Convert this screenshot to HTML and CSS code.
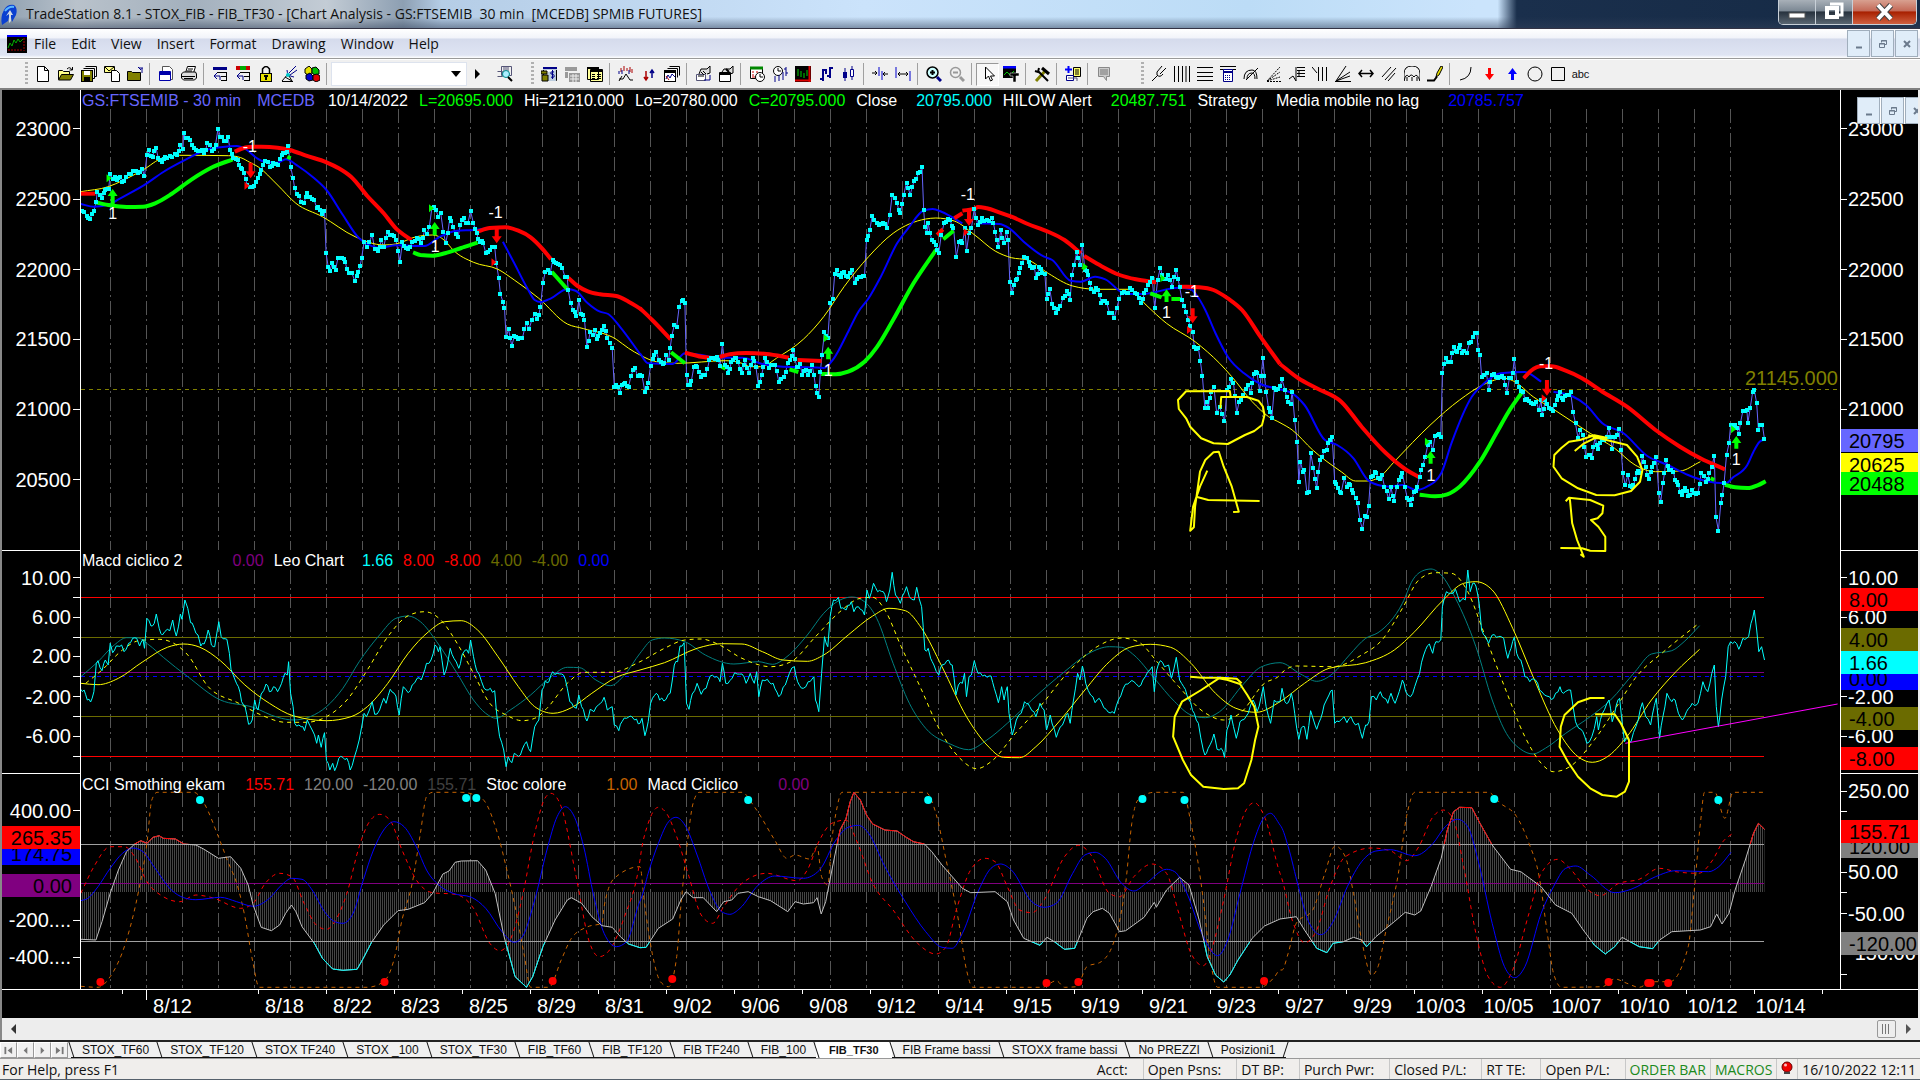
FILE: index.html
```html
<!DOCTYPE html>
<html lang="en">
<head>
    <meta charset="UTF-8">
    <meta name="viewport" content="width=device-width, initial-scale=1.0">
    <title>TradeStation 8.1 - STOX_FIB - FIB_TF30</title>
    <link rel="stylesheet" href="styles.css">
</head>
<body>
    <header class="titlebar">
        <svg class="app-icon" viewBox="0 0 18 26"><path d="M4 9 Q7 3 14 4 Q18 7 16 14 L12 21 L10 12 L8 20 L2 24 Q0 16 4 9Z" fill="#0a3fd0"/><path d="M5 10 Q9 5 14 6" stroke="#5bb8ff" stroke-width="2" fill="none"/><path d="M9 22 V13 L6 15 L10 9 L13 14 L11 14 V20Z" fill="#cfd9e6"/></svg>
        <h1 class="title">TradeStation 8.1 - STOX_FIB - FIB_TF30 - [Chart Analysis - GS:FTSEMIB&nbsp; 30 min&nbsp; [MCEDB] SPMIB FUTURES]</h1>
        <div class="window-buttons">
            <button class="win-btn" aria-label="Minimize"><svg viewBox="0 0 20 20"><rect x="2" y="11" width="16" height="5" fill="#fff" stroke="#555"/></svg></button>
            <button class="win-btn" aria-label="Restore"><svg viewBox="0 0 20 20"><path d="M6 2h12v11h-3" fill="none" stroke="#fff" stroke-width="3"/><rect x="3" y="6" width="10" height="9" fill="none" stroke="#fff" stroke-width="4"/></svg></button>
            <button class="win-btn win-close" aria-label="Close"><svg viewBox="0 0 20 20"><path d="M3 3L16 17M16 3L3 17" stroke="#444" stroke-width="6"/><path d="M3 3L16 17M16 3L3 17" stroke="#fff" stroke-width="4"/></svg></button>
        </div>
    </header>

    <nav class="menubar">
        <svg class="doc-icon" viewBox="0 0 20 18"><rect width="20" height="18" fill="#000"/><rect width="20" height="2" fill="#00f"/><path d="M1 13l2-5 2 3 2-6 2 3 2-4 2 3 3-3" stroke="#0a0" fill="none"/><path d="M1 15h14M17 3v13" stroke="#a00" stroke-dasharray="2 1"/></svg>
        <a href="#">File</a>
        <a href="#">Edit</a>
        <a href="#">View</a>
        <a href="#">Insert</a>
        <a href="#">Format</a>
        <a href="#">Drawing</a>
        <a href="#">Window</a>
        <a href="#">Help</a>
        <div class="mdi-buttons">
            <button class="mdi-btn" aria-label="Minimize chart"><svg viewBox="0 0 10 10"><path d="M2 8.500h6" stroke="#6b7a8c" stroke-width="2"/></svg></button>
            <button class="mdi-btn" aria-label="Restore chart"><svg viewBox="0 0 10 10"><path d="M3.500 3.500v-2h5v4h-2M3 2h6M1 5h6M1.500 4.500h5v4h-5z" fill="none" stroke="#6b7a8c"/></svg></button>
            <button class="mdi-btn" aria-label="Close chart"><svg viewBox="0 0 10 10"><path d="M2 2l6 6M8 2l-6 6" stroke="#6b7a8c" stroke-width="2"/></svg></button>
        </div>
    </nav>

    <div class="toolbar">
        <span class="grip"></span>
        <button class="tool" aria-label="New"><svg viewBox="0 0 16 16"><path d="M2.500.500h7l4 4v11h-11zM9.500.500v4h4" fill="#fff" stroke="#000"/></svg></button>
        <button class="tool" aria-label="Open"><svg viewBox="0 0 16 16"><path d="M.500 13.500v-9h4l1 1h6v3" fill="#ff8" stroke="#000"/><path d="M.500 14l3-5.500h12l-3 5.500z" fill="#808000" stroke="#000"/><path d="M9 3q3-3 5 1M14.500 1v3h-3" fill="none" stroke="#000"/></svg></button>
        <button class="tool" aria-label="Save all"><svg viewBox="0 0 16 16"><path d="M4.500 .500h11v10h-2M2.500 2.500h11v10h-2" fill="none" stroke="#000"/><rect x=".5" y="4.500" width="11" height="11" fill="#808000" stroke="#000"/><path d="M3 5h6v4h-6z" fill="#fff"/><path d="M3 11h6v4h-6z" fill="#000"/></svg></button>
        <button class="tool" aria-label="Mail"><svg viewBox="0 0 16 16"><path d="M.500 .500h10v6h-10z" fill="#ff8" stroke="#000"/><path d="M1 1l4 4 5-4" fill="none" stroke="#000"/><path d="M7.500 4.500h5l3 3v8h-8z" fill="#fff" stroke="#000"/></svg></button>
        <button class="tool" aria-label="Folder"><svg viewBox="0 0 16 16"><path d="M.500 14.500v-9h4l1 1h8v8z" fill="#808000" stroke="#000"/><path d="M15 7V2M12 2h4M11 1l3 3" stroke="#008" fill="none"/></svg></button>
        <span class="sep"></span>
        <button class="tool" aria-label="Window"><svg viewBox="0 0 16 16"><path d="M4.500.500h7l3 3v10h-10z" fill="#fff" stroke="#555"/><path d="M1.500 5.500h11v9h-11z" fill="#fff" stroke="#00a"/><path d="M1 6h12v3H1z" fill="#00a"/></svg></button>
        <button class="tool" aria-label="Print"><svg viewBox="0 0 16 16"><path d="M4.500 7l2-6.500h8l-2 6.500" fill="#fff" stroke="#000"/><path d="M.500 8l2-2h12l1 2v4l-2 2h-11l-2-2z" fill="#ddd" stroke="#000"/><path d="M1 10.500h13M3 12.500h9M7 3h5M6 5h5" stroke="#000"/></svg></button>
        <span class="sep"></span>
        <button class="tool" aria-label="Back symbol"><svg viewBox="0 0 16 16"><path d="M1 1h14v3H1z" fill="#008"/><path d="M5 6.500h10M9 10.500h6M9 14.500h6M14.500 6v9" stroke="#000"/><path d="M5 7l-3 3 3 3M2 10h6v4" fill="none" stroke="#008"/></svg></button>
        <button class="tool" aria-label="Colour symbol"><svg viewBox="0 0 16 16"><path d="M1 0h14v4H1z" fill="#0a0"/><path d="M1 0h4v4H1zM11 0h4v4h-4z" fill="#c00"/><path d="M5 6.500h10M9 10.500h6M9 14.500h6M14.500 6v9" stroke="#000"/><path d="M5 7l-3 3 3 3M2 10h6v4" fill="none" stroke="#008"/></svg></button>
        <button class="tool" aria-label="Lock"><svg viewBox="0 0 16 16"><path d="M4.500 7V3q3.500-5 7 0v4" fill="none" stroke="#000" stroke-width="1.500"/><rect x="2.500" y="7.500" width="11" height="8" fill="#e6e000" stroke="#000"/><path d="M6 9h4v2H9v3H7v-3H6z" fill="#000"/></svg></button>
        <button class="tool" aria-label="Satellite"><svg viewBox="0 0 16 16"><path d="M8 7l7-7M9 9l7-5M6 4q0 6 7 7" stroke="#008" fill="none"/><path d="M1 15l6-7 4 7M4 11l7 4M1 15.500h11" stroke="#000" fill="none"/><circle cx="7" cy="9" r="2" fill="#0cc"/></svg></button>
        <button class="tool" aria-label="Cubes"><svg viewBox="0 0 16 16"><path d="M1 3l4-3 3 3v4l-4 2-3-2z" fill="#e6e000" stroke="#000"/><path d="M8 2l4-1 3 3v4l-4 1-3-2z" fill="#0b0" stroke="#000"/><path d="M2 9l4-2 3 3v4l-4 1-3-2z" fill="#00c" stroke="#000"/><path d="M9 9l4-1 3 2v4l-4 2-3-2z" fill="#d00" stroke="#000"/></svg></button>
        <span class="sep"></span>
        <select class="symbol-box" aria-label="Symbol"><option></option></select>
        <button class="tool narrow" aria-label="Go"><svg viewBox="0 0 16 16"><path d="M6 3l5 5-5 5z" fill="#000"/></svg></button>
        <button class="tool lookup" aria-label="Lookup"><svg viewBox="0 0 16 16"><path d="M4.500 .500h10v9h-10zM.500 5.500h5v5h-5M7 1v5M9 1v3M11 1v4" fill="none" stroke="#557"/><circle cx="9" cy="8" r="3.500" fill="#aef" stroke="#088"/><path d="M11 11l4 4" stroke="#000" stroke-width="2"/></svg></button>
        <span class="grip"></span>
        <button class="tool" aria-label="Money table"><svg viewBox="0 0 16 16"><path d="M2.500 1.500h13v13h-13z" fill="#fff" stroke="#000"/><path d="M2 1h14v3H2zM7 6v9h8V4z" fill="#bcd"/><path d="M2 2h14" stroke="#008" stroke-width="2"/><path d="M13 6q-4-1-3 2 4 0 3 3-2 1-3 0M11.500 4v9" fill="none" stroke="#008"/><path d="M0 5h6v3H0zM1 9h6v6H1z" fill="#808000" stroke="#000"/></svg></button>
        <button class="tool" aria-label="Grid off" disabled><svg viewBox="0 0 16 16"><path d="M1 1h12v4H1zM5 7h11v9H5zM1 6h3v6H1z" fill="#999"/><path d="M6 10h9M6 13h9M9 8v8M12 8v8" stroke="#eee"/></svg></button>
        <button class="tool" aria-label="Table"><svg viewBox="0 0 16 16"><path d="M.500 1.500h11v12H.500zM3.500 3.500h12v12h-12z" fill="#ff9" stroke="#000"/><path d="M0 2h12M4 5h11" stroke="#000" stroke-width="2"/><path d="M5 8.500h3M5 10.500h3M5 12.500h3M10 8.500h4M10 10.500h4M10 12.500h4" stroke="#000"/></svg></button>
        <span class="sep"></span>
        <button class="tool" aria-label="Insert analysis"><svg viewBox="0 0 16 16"><path d="M3 2v4M6 0v5M9 2v3M12 1v5M14 3v4" stroke="#a00"/><path d="M1 5v3M4 4v4M11 4v4" stroke="#008"/><path d="M1 13h4l3-5 4 6h3M1 15l3-5" fill="none" stroke="#000"/></svg></button>
        <button class="tool" aria-label="Strategy"><svg viewBox="0 0 16 16"><path d="M5 5v9M3 11l2 3 2-3" fill="none" stroke="#a00" stroke-width="1.500"/><path d="M11 12V4M9 7l2-3 2 3" fill="none" stroke="#008" stroke-width="1.500"/></svg></button>
        <button class="tool" aria-label="Chart stack"><svg viewBox="0 0 16 16"><path d="M5.500.500h10v9M3.500 2.500h10v9" fill="none" stroke="#000"/><rect x=".5" y="4.500" width="11" height="11" fill="#fff" stroke="#000"/><path d="M1 6h10" stroke="#000" stroke-width="2"/><path d="M2 13l2-4 2 3 2-4 3 3" fill="none" stroke="#008"/><path d="M2 10l3 4" stroke="#a00"/></svg></button>
        <span class="sep"></span>
        <button class="tool" aria-label="Format symbol"><svg viewBox="0 0 16 16"><path d="M4 8l2-5h6l3-3v7l-3 1" fill="#ddd" stroke="#000"/><path d="M1.500 8.500h9v6h-9z" fill="#fff" stroke="#557"/><path d="M3 10h6M8 5l3 3M6 6l3 3" stroke="#000"/><path d="M9 14h6V9" fill="none" stroke="#008"/></svg></button>
        <button class="tool" aria-label="Format window"><svg viewBox="0 0 16 16"><path d="M4 6l2-3h6l3-3v7l-3 1" fill="#ddd" stroke="#000"/><path d="M1.500 6.500h11v9h-11z" fill="#fff" stroke="#000"/><path d="M1 8h12M8 3l3 3" stroke="#000" stroke-width="2"/></svg></button>
        <span class="sep"></span>
        <button class="tool" aria-label="Calendar"><svg viewBox="0 0 16 16"><path d="M1.500 1.500h12v11h-12z" fill="#fff" stroke="#000"/><path d="M1 2h13" stroke="#080" stroke-width="3"/><path d="M3 6h2M7 6h2M3 9h2M3 11h3" stroke="#c00"/><circle cx="11" cy="11" r="4.500" fill="#fff" stroke="#000"/><path d="M11 8v3h3" fill="none" stroke="#000"/></svg></button>
        <button class="tool" aria-label="Interval"><svg viewBox="0 0 16 16"><circle cx="6" cy="5" r="4.500" fill="#fff" stroke="#000"/><path d="M6 2v3h3" fill="none" stroke="#000"/><path d="M3 10v6M7 9v6M11 6v8M14 1v9M12 3h2M14 7h2" stroke="#008"/></svg></button>
        <button class="tool" aria-label="Chart style"><svg viewBox="0 0 16 16"><path d="M0 0h16v16H0z" fill="#000"/><path d="M14.500 0v16M0 14.500h16" stroke="#d00" stroke-width="2"/><path d="M3 3v7M6 5v6M9 7v5M12 4v6" stroke="#0c0"/></svg></button>
        <button class="tool" aria-label="Bar chart"><svg viewBox="0 0 16 16"><path d="M5 3v12M12 1v11M5 4h4M2 13h3M12 2h3M9 10h3M8 3v5" stroke="#008" stroke-width="2" fill="none"/></svg></button>
        <button class="tool" aria-label="Candles"><svg viewBox="0 0 16 16"><path d="M4 2v13M11 0v14" stroke="#008"/><path d="M2 6h4v6H2z" fill="#008"/><path d="M9.500 3.500h3v7h-3z" fill="#fff" stroke="#008"/></svg></button>
        <span class="sep"></span>
        <button class="tool" aria-label="Decrease spacing"><svg viewBox="0 0 16 16"><path d="M7 1v9M10 5v9" stroke="#00c"/><path d="M0 7h5M3 5l2 2-2 2M16 8h-5M13 6l-2 2 2 2" fill="none" stroke="#000"/></svg></button>
        <button class="tool" aria-label="Increase spacing"><svg viewBox="0 0 16 16"><path d="M1 1v11M15 5v10" stroke="#00c"/><path d="M3 8h10M5 6L3 8l2 2M11 6l2 2-2 2" fill="none" stroke="#000"/></svg></button>
        <span class="sep"></span>
        <button class="tool" aria-label="Zoom in"><svg viewBox="0 0 16 16"><circle cx="6.500" cy="6.500" r="5.500" fill="#cff" stroke="#000" stroke-width="1.500"/><path d="M4 6.500h5M6.500 4v5" stroke="#000" stroke-width="2"/><path d="M11 11l4 4" stroke="#008" stroke-width="3"/></svg></button>
        <button class="tool" aria-label="Zoom out" disabled><svg viewBox="0 0 16 16"><circle cx="6.500" cy="6.500" r="5" fill="none" stroke="#999" stroke-width="1.500"/><path d="M4 6.500h5" stroke="#999" stroke-width="2"/><path d="M11 11l4 4" stroke="#999" stroke-width="3"/></svg></button>
        <span class="sep"></span>
        <button class="tool pressed" aria-label="Pointer"><svg viewBox="0 0 16 16"><path d="M5.500 1v12l3-3 2 5 2-1-2-4h4z" fill="#fff" stroke="#000"/></svg></button>
        <button class="tool" aria-label="Text tool"><svg viewBox="0 0 16 16"><path d="M0 0h13v12H0z" fill="#000"/><path d="M0 1h13" stroke="#00f" stroke-width="3"/><path d="M1 9l3-3 3 3 4-4" fill="none" stroke="#0c0"/><path d="M7 7h9v3h-3v6h-3v-6H7z" fill="#000" stroke="#fff" stroke-width=".5"/></svg></button>
        <span class="sep"></span>
        <button class="tool" aria-label="Tools"><svg viewBox="0 0 16 16"><path d="M2 15L12 4" stroke="#808000" stroke-width="3"/><path d="M8 2l7 6" stroke="#000" stroke-width="3"/><path d="M14 15L4 5M1 5l3 1 1-4" fill="none" stroke="#000" stroke-width="2"/></svg></button>
        <span class="sep"></span>
        <button class="tool" aria-label="Add sheets"><svg viewBox="0 0 16 16"><path d="M3.500 0v7M0 3.500h7" stroke="#00f" stroke-width="2"/><path d="M8.500 1.500h7v9h-7z" fill="#ff6" stroke="#000"/><path d="M10 4h4M10 6h4M10 8h4" stroke="#000"/><path d="M1.500 9.500h7v5h-7z" fill="#fff" stroke="#008"/><path d="M3 12h9v3" fill="none" stroke="#557"/></svg></button>
        <span class="sep"></span>
        <button class="tool" aria-label="Comment" disabled><svg viewBox="0 0 16 16"><path d="M2.500 1.500h11v9h-3v4l-3-4h-5z" fill="#ccc" stroke="#888"/><path d="M4 4h8M4 6h8M4 8h8" stroke="#777"/></svg></button>
        <span class="grip drawing"></span>
        <button class="tool" aria-label="Pitchfork"><svg viewBox="0 0 16 16"><path d="M1 15l6-6M6 6v3q3 3 6-1M6 6l5-6M9 8l6-6" fill="none" stroke="#000"/></svg></button>
        <button class="tool" aria-label="Vertical lines"><svg viewBox="0 0 16 16"><path d="M.500 0v16M4.500 0v16M8.500 0v16M15.500 0v16M12 0v16" stroke="#000"/></svg></button>
        <button class="tool" aria-label="Horizontal lines"><svg viewBox="0 0 16 16"><path d="M0 1.500h16M0 6.500h16M0 10.500h16M0 14.500h16" stroke="#000"/></svg></button>
        <button class="tool" aria-label="Calculator"><svg viewBox="0 0 16 16"><path d="M0 .500h16M0 3.500h16" stroke="#000"/><path d="M3.500 3.500h9v12h-9z" fill="#fff" stroke="#008"/><path d="M4 6h8" stroke="#008" stroke-width="2"/><path d="M5 9.500h6M5 11.500h6M5 13.500h6" stroke="#008" stroke-dasharray="1 1"/></svg></button>
        <button class="tool" aria-label="Arcs"><svg viewBox="0 0 16 16"><path d="M1 13Q1 4 9 4q5 0 5 9M4 13q0-6 5-6 3 0 3 6M3 14L15 2" fill="none" stroke="#000"/></svg></button>
        <button class="tool" aria-label="Fan"><svg viewBox="0 0 16 16"><path d="M1 15.500h14M1 15L14 1M1 15l13-9M1 15l13-4" fill="none" stroke="#000" stroke-dasharray="2 1"/></svg></button>
        <button class="tool" aria-label="Retracement"><svg viewBox="0 0 16 16"><path d="M0 13l4-3 3 5V1M8 1.500h8M8 4.500h8M8 7.500h8M8 10.500h8M10 4v6" fill="none" stroke="#000"/></svg></button>
        <button class="tool" aria-label="Time lines"><svg viewBox="0 0 16 16"><path d="M0 1l5 6M6.500 1v14M10.500 1v14M14.500 1v14" fill="none" stroke="#000"/></svg></button>
        <button class="tool" aria-label="Gann fan"><svg viewBox="0 0 16 16"><path d="M0 15.500h16M1 15L11 0M1 15L15 6M1 15l14-5" fill="none" stroke="#000"/></svg></button>
        <button class="tool" aria-label="Extend"><svg viewBox="0 0 16 16"><path d="M1 7.500h14M4 4L1 7.500 4 11M12 4l3 3.500-3 3.500" fill="none" stroke="#000" stroke-width="1.500"/></svg></button>
        <button class="tool" aria-label="Parallel lines"><svg viewBox="0 0 16 16"><path d="M1 11L10 1M4 14L15 2M7 15l7-8" fill="none" stroke="#000"/></svg></button>
        <button class="tool" aria-label="Cycles"><svg viewBox="0 0 16 16"><path d="M0 15V8q0-8 8-8t8 8v7M0 15q2-9 5-4 2-4 5 0 3-5 6 4M3 11v4M8 11v4M13 11v4" fill="none" stroke="#000"/></svg></button>
        <button class="tool" aria-label="Pencil"><svg viewBox="0 0 16 16"><path d="M9 11l1-4 4-7 2 1-4 8z" fill="#e6e000" stroke="#000"/><path d="M0 14.500h7l3-4" fill="none" stroke="#000" stroke-width="2"/></svg></button>
        <span class="sep"></span>
        <button class="tool" aria-label="Arc"><svg viewBox="0 0 16 16"><path d="M13 1q0 11-11 13" fill="none" stroke="#000"/></svg></button>
        <button class="tool" aria-label="Arrow down"><svg viewBox="0 0 16 16"><path d="M7 2h3v6h3l-4.500 6L4 8h3z" fill="#f00"/></svg></button>
        <button class="tool" aria-label="Arrow up"><svg viewBox="0 0 16 16"><path d="M7 14h3V8h3L8.500 2 4 8h3z" fill="#00f"/></svg></button>
        <button class="tool" aria-label="Ellipse"><svg viewBox="0 0 16 16"><circle cx="8" cy="8" r="7" fill="none" stroke="#000"/></svg></button>
        <button class="tool" aria-label="Rectangle"><svg viewBox="0 0 16 16"><path d="M1.500 1.500h13v13h-13z" fill="none" stroke="#000"/></svg></button>
        <button class="tool abc">abc</button>
    </div>

    <main class="chart">
        <svg class="plot" id="plot" viewBox="81 90 1759 899" preserveAspectRatio="none"></svg>
        <svg class="plot labels" id="labels"></svg>
        <svg class="axis-left" id="axis-left"></svg>
        <svg class="axis-right" id="axis-right"></svg>
        <svg class="axis-time" id="axis-time"></svg>

        <div class="legend legend-price">
            <span class="slate">GS:FTSEMIB - 30 min</span>
            <span class="slate wide">MCEDB</span>
            <span>10/14/2022</span>
            <span class="green">L=20695.000</span>
            <span>Hi=21210.000</span>
            <span>Lo=20780.000</span>
            <span class="green">C=20795.000</span>
            <span>Close</span>
            <span class="cyan value">20795.000</span>
            <span>HILOW Alert</span>
            <span class="green value">20487.751</span>
            <span>Strategy</span>
            <span class="value">Media mobile no lag</span>
            <span class="blue far">20785.757</span>
        </div>
        <div class="legend legend-macd">
            <span>Macd ciclico 2</span>
            <span class="purple far">0.00</span>
            <span>Leo Chart</span>
            <span class="cyan value">1.66</span>
            <span class="red">8.00</span>
            <span class="red">-8.00</span>
            <span class="olive">4.00</span>
            <span class="olive">-4.00</span>
            <span class="blue">0.00</span>
        </div>
        <div class="legend legend-cci">
            <span>CCI Smothing ekam</span>
            <span class="red value">155.71</span>
            <span class="gray">120.00</span>
            <span class="gray">-120.00</span>
            <span class="dark">155.71</span>
            <span>Stoc colore</span>
            <span class="orange far">1.00</span>
            <span>Macd Ciclico</span>
            <span class="purple far">0.00</span>
        </div>

        <div class="mdi-buttons floating">
            <button class="mdi-btn" aria-label="Minimize pane"><svg viewBox="0 0 10 10"><path d="M2 8.500h6" stroke="#6b7a8c" stroke-width="2"/></svg></button>
            <button class="mdi-btn" aria-label="Restore pane"><svg viewBox="0 0 10 10"><path d="M3.500 3.500v-2h5v4h-2M3 2h6M1 5h6M1.500 4.500h5v4h-5z" fill="none" stroke="#6b7a8c"/></svg></button>
            <button class="mdi-btn" aria-label="Close pane"><svg viewBox="0 0 10 10"><path d="M2 2l6 6M8 2l-6 6" stroke="#6b7a8c" stroke-width="2"/></svg></button>
        </div>
    </main>

    <div class="scrollbar">
        <button class="scroll-btn" aria-label="Scroll left"><svg viewBox="0 0 8 10"><path d="M6 0v10L1 5z" fill="#333"/></svg></button>
        <span class="scroll-track"><span class="scroll-thumb"></span></span>
        <button class="scroll-btn" aria-label="Scroll right"><svg viewBox="0 0 8 10"><path d="M2 0v10l5-5z" fill="#555"/></svg></button>
    </div>

    <div class="tabs">
        <button class="tab-nav" aria-label="First"><svg viewBox="0 0 10 10"><path d="M1.500 1v8" stroke="#777" stroke-width="2"/><path d="M9 1v8L4 5z" fill="#777"/></svg></button>
        <button class="tab-nav" aria-label="Previous"><svg viewBox="0 0 10 10"><path d="M7 1v8L3 5z" fill="#777"/></svg></button>
        <button class="tab-nav" aria-label="Next"><svg viewBox="0 0 10 10"><path d="M3 1v8l4-4z" fill="#777"/></svg></button>
        <button class="tab-nav" aria-label="Last"><svg viewBox="0 0 10 10"><path d="M8.500 1v8" stroke="#777" stroke-width="2"/><path d="M1 1v8l5-4z" fill="#777"/></svg></button>
        <button class="tab first">STOX_TF60</button>
        <button class="tab">STOX_TF120</button>
        <button class="tab">STOX TF240</button>
        <button class="tab">STOX _100</button>
        <button class="tab">STOX_TF30</button>
        <button class="tab">FIB_TF60</button>
        <button class="tab">FIB_TF120</button>
        <button class="tab">FIB TF240</button>
        <button class="tab">FIB_100</button>
        <button class="tab active">FIB_TF30</button>
        <button class="tab">FIB Frame bassi</button>
        <button class="tab">STOXX frame bassi</button>
        <button class="tab">No PREZZI</button>
        <button class="tab last">Posizioni1</button>
    </div>

    <footer class="statusbar">
        <span class="help">For Help, press F1</span>
        <span class="cell">Acct:</span>
        <span class="cell">Open Psns:</span>
        <span class="cell">DT BP:</span>
        <span class="cell">Purch Pwr:</span>
        <span class="cell">Closed P/L:</span>
        <span class="cell">RT TE:</span>
        <span class="cell">Open P/L:</span>
        <span class="cell tight on">ORDER BAR</span>
        <span class="cell tight on">MACROS</span>
        <span class="cell tight"><svg class="led" viewBox="0 0 12 14"><circle cx="6" cy="6" r="5" fill="#e00" stroke="#600"/><circle cx="4.500" cy="4" r="1.500" fill="#fbb"/><path d="M3 12h6" stroke="#444" stroke-width="2"/></svg></span>
        <span class="cell tight">16/10/2022 12:11</span>
    </footer>
    <div class="edge"></div>

    <script src="chart.js"></script>
</body>
</html>
```
FILE: styles.css
```css
* { box-sizing: border-box; }
body { margin: 0; height: 100vh; display: flex; flex-direction: column; overflow: hidden; background: #f0f0f0; color: #111; font-family: "Open Sans", "Noto Sans", sans-serif; font-size: 14px; }
button { border: 0; padding: 0; background: none; font: inherit; color: inherit; }
a { color: inherit; text-decoration: none; }

.titlebar { flex: none; height: 29px; display: flex; align-items: center; border-bottom: 1px solid #334; background: linear-gradient(180deg, transparent 60%, rgba(50, 65, 90, 0.5) 100%), linear-gradient(90deg, #8fa0b0 0, #b9c2cb 4%, #a3b0bd 10%, #c3ccd5 17%, #8d9fb2 21%, #b5cde6 23%, #cbe3fb 45%, #bcdcf6 65%, #cbe4fc 77%, #cbe4fc 78%, #1a2f4c 79%, #152a45 100%); }
.app-icon { width: 18px; height: 26px; }
.title { flex: 1; margin: 0 0 0 8px; font-size: 14px; font-weight: 400; line-height: 26px; white-space: nowrap; }
.window-buttons { display: flex; align-self: flex-start; height: 25px; margin-right: 3px; border: 1px solid #c8d0d8; border-top: 0; border-radius: 0 0 5px 5px; overflow: hidden; }
.win-btn { width: 37px; border-right: 1px solid #c8d0d8; background: linear-gradient(#a8b0b8 0, #7c8894 45%, #27323e 50%, #5a6672 100%); }
.win-btn svg { display: block; width: 20px; height: 20px; margin: 0 auto; }
.win-close { width: 63px; border-right: 0; background: linear-gradient(#d8a090 0, #c46a58 45%, #a82000 50%, #d06040 100%); }

.menubar { flex: none; height: 30px; display: flex; align-items: center; gap: 15px; padding-left: 7px; background: linear-gradient(#fff 0, #f2f4fa 30%, #d5dbec 35%, #dfe4f3 90%, #fff 100%); border-bottom: 1px solid #9a9a9a; }
.doc-icon { width: 20px; height: 18px; margin-right: -8px; }
.mdi-buttons { display: flex; gap: 1px; margin-left: auto; padding-right: 2px; }
.mdi-btn { width: 23px; height: 27px; border: 1px solid #a0aebc; background: #e0edf9; display: flex; align-items: center; justify-content: center; }
.mdi-btn svg { width: 10px; height: 10px; }
.floating { position: absolute; right: -10px; top: 7px; padding: 0; background: #fff; }

.toolbar { flex: none; height: 31px; display: flex; align-items: center; padding-left: 25px; background: #f0f0f0; border-top: 1px solid #fff; border-bottom: 2px solid #808080; }
.tool { flex: none; width: 23px; height: 23px; display: flex; align-items: center; justify-content: center; }
.tool svg { width: 16px; height: 16px; }
.tool.narrow { width: 20px; }
.tool.lookup { margin-left: 6px; }
.tool.pressed { background: #f8f8f8; border: 1px solid #999; border-right-color: #fff; border-bottom-color: #fff; }
.tool.abc { font-family: "Liberation Sans", Arial, sans-serif; font-size: 11px; }
.sep { flex: none; width: 1px; height: 22px; margin: 0 4px 0 3px; background: #a0a0a0; }
.grip { flex: none; width: 3px; height: 24px; margin-right: 3px; background: repeating-linear-gradient(#b0b0b0 0 2px, transparent 2px 4px); }
.lookup + .grip { margin-left: 15px; }
.grip.drawing { margin-left: 26px; }
.symbol-box { width: 136px; height: 24px; border: 1px solid #dde3ee; background: #fff url("data:image/svg+xml,%3Csvg xmlns='http://www.w3.org/2000/svg' viewBox='0 0 10 6'%3E%3Cpath d='M0 0h10L5 6z'/%3E%3C/svg%3E") no-repeat right 5px center / 10px 6px; appearance: none; }

.chart { flex: 1; min-height: 0; position: relative; overflow: hidden; display: grid; grid-template-columns: 79px 1fr 78px; grid-template-rows: 460fr 224fr 215fr 29px; border-left: 2px solid #888; border-right: 2px solid #eee; background: #000; font-family: "Liberation Sans", Arial, sans-serif; font-size: 20px; }
.chart > svg { display: block; width: 100%; height: 100%; }
.chart text { fill: #fff; }
.plot { grid-area: 1 / 2 / 4 / 3; }
.axis-left { grid-area: 1 / 1 / 4 / 2; border-right: 1px solid #fff; }
.axis-right { grid-area: 1 / 3 / 4 / 4; border-left: 1px solid #fff; }
.axis-time { grid-area: 4 / 1 / 5 / 4; border-top: 1px solid #fff; }
.labels .mark { font-size: 16px; }
.labels .last-high { fill: #808000; }

.legend { grid-column: 2; align-self: start; display: flex; gap: 10px; padding: 1px 0 0 1px; font-size: 16px; line-height: 20px; color: #fff; white-space: nowrap; z-index: 1; }
.legend-price { grid-row: 1; gap: 11px; }
.legend-macd { grid-row: 2; }
.legend-cci { grid-row: 3; }
.wide { margin-left: 5px; margin-right: 2px; }
.value { margin-left: 8px; }
.legend-cci .value { margin-left: 10px; }
.far { margin-left: 18px; }
.legend-macd .far { margin-left: 40px; }
.legend-cci .far { margin-left: 30px; }
.slate { color: #6666ff; }
.green { color: #00ff00; }
.cyan { color: #00ffff; }
.blue { color: #0000ff; }
.red { color: #ff0000; }
.purple { color: #800080; }
.olive { color: #6b6b00; }
.gray { color: #808080; }
.dark { color: #404040; }
.orange { color: #c86400; }

.line { fill: none; stroke-width: 1; }
.grid { stroke: #555; stroke-dasharray: 14 4 2 4; }
.thick { stroke-width: 4; }
.medium { stroke-width: 2; }
.dashed { stroke-dasharray: 4 4; }
.pen { fill: none; stroke: #ffff00; stroke-width: 2; stroke-linejoin: round; }

.scrollbar { flex: none; height: 22px; display: flex; align-items: center; padding: 0 8px; background: #ededed; border-left: 2px solid #888; }
.scroll-btn svg { width: 8px; height: 10px; display: block; }
.scroll-track { flex: 1; display: flex; justify-content: flex-end; padding-right: 8px; }
.scroll-thumb { width: 19px; height: 18px; border: 1px solid #999; border-radius: 2px; background: repeating-linear-gradient(90deg, #777 0 1px, transparent 1px 3px) center / 9px 10px no-repeat, #eee; }

.tabs { flex: none; height: 19px; display: flex; align-items: stretch; border-top: 2px solid #222; border-bottom: 1px solid #999; background: #f0f0f0; font-family: "Liberation Sans", Arial, sans-serif; font-size: 12px; }
.tab-nav { width: 17px; border: 1px solid #999; border-top-color: #fff; border-left-color: #fff; display: flex; align-items: center; justify-content: center; }
.tab-nav svg { width: 9px; height: 9px; }
.tab { position: relative; padding: 0 10px 0 11px; border-bottom: 1px solid #111; line-height: 14px; white-space: nowrap; }
.tab::before { content: ""; position: absolute; left: 0; top: 0; width: 1px; height: 16px; background: #111; transform: skewX(18deg); }
.tab.first { margin-left: 3px; }
.tab.active { padding: 0 13px; background: #fff; border-bottom-color: #fff; font-weight: 700; font-size: 11px; }
.tab.last::after { content: ""; position: absolute; right: 0; top: 0; width: 1px; height: 16px; background: #111; transform: skewX(-18deg); }

.statusbar { flex: none; height: 20px; display: flex; align-items: stretch; background: #f0eeec; line-height: 22px; white-space: nowrap; }
.help { flex: 1; padding-left: 2px; }
.cell { padding: 0 15px 0 4px; border-left: 1px solid #c8c8c8; }
.help + .cell { border-left: 0; }
.cell.tight { padding: 0 4px; }
.on { color: #1c8a1c; }
.led { width: 12px; height: 14px; }
.edge { flex: none; height: 1px; background: #55606c; }
```
FILE: chart.js
```js
// Curves are stored in three 640px wide tiles, in tile units
const LEFT = 81, TOP = 90, WIDTH = 1759, HEIGHT = 899;
const TILE = 640, UX = 2.45, UY = 3;
const PRICE = 90, LOWER = 540;

const plot = document.getElementById('plot');
const labels = document.getElementById('labels');

function add(parent, tag, attrs, text) {
    const el = document.createElementNS('http://www.w3.org/2000/svg', tag);
    for (const key in attrs) el.setAttribute(key, attrs[key]);
    if (text !== undefined) el.textContent = text;
    parent.appendChild(el);
    return el;
}

function pos(tile, row, x, y) {
    return [tile * TILE + x / UX, row + y / UY];
}

function points(tile, row, str) {
    return str.trim().split(/\s+/).map(p => {
        const [x, y] = p.split(',').map(Number);
        return pos(tile, row, x, y);
    });
}

function join(row, tiles) {
    const out = [];
    tiles.forEach((str, i) => {
        points(i, row, str).forEach(p => {
            if (!out.length || p[0] - out[out.length - 1][0] > 0.3) out.push(p);
        });
    });
    return out;
}

function poly(pts) {
    return 'M' + pts.map(p => p[0].toFixed(1) + ' ' + p[1].toFixed(1)).join('L');
}

// Monotone cubic through the points, no overshoot at the peaks
function smooth(pts) {
    const n = pts.length;
    if (n < 3) return poly(pts);
    const s = [], m = [];
    for (let i = 0; i < n - 1; i++) s.push((pts[i + 1][1] - pts[i][1]) / (pts[i + 1][0] - pts[i][0]));
    m.push(s[0]);
    for (let i = 1; i < n - 1; i++) {
        const h0 = pts[i][0] - pts[i - 1][0], h1 = pts[i + 1][0] - pts[i][0];
        const p = (s[i - 1] * h1 + s[i] * h0) / (h0 + h1);
        m.push((Math.sign(s[i - 1]) + Math.sign(s[i])) * Math.min(Math.abs(s[i - 1]), Math.abs(s[i]), 0.5 * Math.abs(p)) || 0);
    }
    m.push(s[n - 2]);
    let d = 'M' + pts[0].map(v => v.toFixed(1)).join(' ');
    for (let i = 0; i < n - 1; i++) {
        const h = (pts[i + 1][0] - pts[i][0]) / 3;
        d += 'C' + [pts[i][0] + h, pts[i][1] + m[i] * h, pts[i + 1][0] - h, pts[i + 1][1] - m[i + 1] * h, pts[i + 1][0], pts[i + 1][1]].map(v => v.toFixed(1)).join(' ');
    }
    return d;
}

function curve(row, tiles, color, cls) {
    return add(plot, 'path', { class: 'line ' + (cls || ''), stroke: color, d: smooth(join(row, tiles)) });
}

function segment(tile, row, str, color, cls) {
    return add(plot, 'path', { class: 'line ' + (cls || ''), stroke: color, d: smooth(points(tile, row, str)) });
}

function hline(y, color, x2, extra) {
    add(plot, 'line', Object.assign({ x1: LEFT, x2: x2, y1: y, y2: y, stroke: color }, extra));
}

// Bars between the stored points, two pixels apart
function bars(pts, amp) {
    const out = [pts[0]];
    for (let i = 1; i < pts.length; i++) {
        const a = pts[i - 1], b = pts[i];
        const n = Math.max(1, Math.round((b[0] - a[0]) / 2.1));
        for (let k = 1; k <= n; k++) {
            const x = a[0] + (b[0] - a[0]) * k / n;
            const noise = k < n ? Math.sin(x * 12.9) * amp : 0;
            out.push([x, a[1] + (b[1] - a[1]) * k / n + noise]);
        }
    }
    return out;
}

const price = [
    '200,362 212,378 220,388 230,362 236,335 238,305 250,325 258,300 266,298 270,252 277,268 290,264 303,272 315,252 325,242 338,250 348,236 354,258 360,196 364,180 374,202 382,173 388,205 396,217 410,203 422,200 434,195 442,165 448,178 450,130 460,145 470,165 480,180 490,182 500,190 508,160 520,184 528,165 534,116 540,140 550,152 558,140 564,180 572,205 582,210 590,235 598,250 606,285 617,292 632,265 640,240 650,213 662,230 670,218 682,225 690,195 698,190 706,168 712,230 718,265 722,295 732,318 738,335 745,340 753,310 765,328 770,330 776,355 780,350 788,372 795,362 799,490 804,530 808,543 814,520 822,540 828,503 838,503 846,515 850,538 862,548 869,572 878,545 886,505 892,455 898,472 905,455 912,435 918,478 926,483 934,450 940,470 950,425 960,435 970,450 980,515 986,455 1000,478 1010,455 1022,445 1032,460 1040,420 1046,432 1052,410 1058,355 1068,360 1074,380 1080,370 1086,425 1092,460 1102,385 1110,410 1122,440 1128,405 1136,385 1146,400 1153,364 1160,400 1168,430 1176,455 1184,460 1190,488 1200,480 1212,470 1216,520 1222,565 1226,612 1232,635 1236,655 1240,742 1246,718 1254,768 1260,738 1280,745 1290,700 1296,718 1303,690 1310,672 1316,688 1324,652 1330,580 1336,545 1342,540 1348,550 1354,510 1362,520 1372,525 1378,535 1384,560 1390,560 1392,600 1398,640 1404,660 1412,678 1418,630 1424,672 1432,690 1438,772 1446,725 1452,735 1458,720 1462,748 1470,730 1480,708 1488,745 1494,758 1500,775 1505,890 1510,885 1518,910 1524,885 1532,878 1540,890 1546,858 1556,835 1562,858',
    '5,857 12,905 20,878 26,827 40,785 46,810 60,820 64,795 70,810 78,738 84,705 90,710 96,650 102,632 110,640 114,855 118,885 126,873 132,830 140,830 150,862 160,855 170,810 180,805 188,800 196,828 202,762 208,825 216,848 224,815 232,803 240,815 250,848 258,810 268,850 276,805 284,830 290,887 298,855 306,805 316,835 330,825 340,875 352,862 362,818 376,780 384,830 392,822 398,855 406,840 412,855 422,825 426,855 434,910 438,920 442,845 446,795 452,725 460,745 466,640 472,628 477,553 482,540 492,562 500,545 510,562 520,540 526,578 536,560 550,558 555,450 563,420 569,378 580,398 600,402 605,415 612,375 618,315 630,340 638,370 646,315 653,278 662,315 672,272 682,250 691,230 695,360 698,410 703,430 706,400 715,450 724,465 732,490 738,435 745,400 760,390 768,415 775,500 782,455 790,460 796,415 800,483 806,430 812,415 819,356 828,405 838,384 850,390 862,385 870,425 878,470 884,420 892,460 898,425 902,450 906,575 912,608 920,570 928,550 936,520 942,500 952,515 960,535 966,530 970,563 978,530 986,550 992,552 996,628 1004,598 1010,642 1020,670 1030,648 1036,625 1046,603 1054,630 1058,555 1064,525 1070,485 1078,525 1084,465 1090,540 1098,555 1106,598 1122,600 1130,638 1144,640 1150,668 1162,684 1168,655 1180,610 1192,610 1200,595 1212,610 1222,625 1228,638 1236,608 1244,585 1255,563 1261,655 1268,570 1275,533 1284,568 1294,555 1304,590 1314,540 1322,590 1328,630 1338,665 1348,708 1354,725 1358,770 1368,775 1378,858 1384,955 1388,935 1392,955 1400,905 1406,890 1413,970 1420,950 1426,972 1432,992 1438,900 1448,868 1454,880 1462,970 1468,935 1478,915 1490,885 1496,910 1504,852 1512,850 1518,903 1526,805 1534,905 1540,955 1548,985 1554,895 1564,898',
    '5,868 12,900 20,935 26,942 30,905 36,990 42,1055 46,1175 50,1115 56,1145 60,1140 66,1208 70,1205 75,1088 82,1135 90,1195 98,1110 108,1083 114,1080 122,1050 128,1040 134,1175 142,1195 150,1208 157,1165 164,1190 172,1185 180,1210 190,1240 196,1290 202,1318 208,1278 212,1280 217,1248 222,1160 232,1145 240,1165 250,1155 256,1190 266,1228 272,1192 280,1232 286,1190 292,1170 300,1148 306,1190 312,1225 320,1245 328,1205 336,1190 342,1160 350,1125 356,1100 362,1065 368,1055 374,1080 380,1038 386,1035 394,1040 398,848 406,805 418,815 426,770 434,785 442,765 446,788 458,788 464,760 472,742 482,728 486,780 490,795 494,860 506,850 511,900 520,855 540,860 548,865 556,910 562,865 570,850 574,808 580,875 586,890 596,905 600,930 614,940 628,935 634,960 640,930 642,975 650,930 658,955 668,962 678,930 686,905 694,930 704,915 712,905 718,965 724,1000 730,1045 736,1020 742,1035 750,1100 756,1095 764,1105 772,1040 780,1078 790,1050 800,1040 806,1015 814,1078 820,1040 830,1018 836,1080 840,1150 846,1185 852,1155 858,1188 866,1185 874,1150 882,1150 888,1098 896,1130 904,1168 912,1130 922,1102 928,1210 933,1235 938,1180 946,1110 954,1140 964,1145 968,1170 976,1185 984,1215 992,1195 1000,1218 1010,1200 1024,1208 1032,1150 1044,1175 1052,1150 1058,1130 1064,1098 1068,1280 1074,1322 1080,1240 1088,1180 1094,1095 1100,1060 1104,1005 1114,1005 1124,1032 1128,1000 1134,962 1144,960 1146,1000 1152,955 1158,905 1162,900 1168,940 1172,1020 1176,1005 1182,1005 1187,1048'
];

const leo = [
    '198,448 206,450 214,480 222,486 230,455 236,370 240,362 250,392 258,360 265,375 270,310 276,338 285,318 298,315 304,335 315,310 325,295 335,295 342,318 350,298 354,325 360,235 370,258 378,250 383,222 390,265 398,285 410,268 416,272 423,240 432,288 442,222 446,238 453,180 460,205 467,248 475,262 485,285 492,318 500,312 510,270 518,315 526,320 536,245 542,290 556,298 562,340 566,388 576,420 584,440 592,485 600,498 609,553 618,540 624,480 632,510 640,462 652,432 660,455 670,440 680,455 690,430 698,400 704,405 707,365 712,460 718,500 722,550 732,555 738,560 746,572 753,540 765,570 776,610 780,585 787,622 795,578 800,662 808,690 815,670 820,692 830,655 850,655 858,690 868,652 880,600 892,520 898,530 905,510 912,485 918,523 930,510 940,475 946,490 956,448 970,468 978,525 988,440 1000,458 1010,435 1022,415 1032,420 1045,370 1056,360 1066,315 1074,335 1078,320 1088,405 1096,375 1103,325 1112,355 1124,385 1132,345 1140,330 1148,340 1153,300 1160,350 1168,392 1180,425 1186,445 1196,450 1212,452 1216,510 1224,590 1234,630 1240,680 1245,650 1254,668 1260,640 1275,645 1290,605 1300,635 1310,560 1320,540 1328,450 1336,422 1345,425 1354,395 1365,400 1376,402 1385,418 1390,445 1396,485 1405,500 1412,505 1418,465 1425,500 1438,543 1446,508 1455,515 1466,495 1480,472 1488,510 1500,500 1505,555 1516,572 1524,545 1535,535 1548,530 1555,540 1568,550',
    '5,535 12,587 20,545 26,490 40,460 48,480 64,478 74,460 84,375 92,365 98,318 108,308 114,490 120,508 128,462 140,430 150,463 162,445 172,408 188,410 196,425 202,370 210,430 220,422 232,398 250,402 260,430 270,400 280,430 286,395 291,470 300,420 312,418 326,430 340,470 356,435 366,400 378,380 386,425 400,445 412,425 426,410 430,480 438,515 445,400 452,290 460,320 466,230 474,180 486,172 492,205 505,210 518,185 524,215 535,200 550,225 556,150 562,175 572,130 582,155 596,155 604,185 612,150 618,97 626,165 638,190 653,140 660,170 672,180 678,142 690,200 698,330 706,325 712,355 720,375 732,405 740,375 752,362 765,375 774,465 780,435 790,430 795,400 800,470 806,410 812,405 819,362 828,400 845,405 860,408 868,445 878,488 886,440 892,480 900,440 904,520 912,585 922,540 934,520 942,485 955,500 970,530 980,490 990,510 996,570 1005,525 1020,592 1030,560 1040,540 1048,520 1054,550 1062,480 1072,400 1078,420 1084,378 1092,430 1104,465 1115,488 1125,475 1142,508 1162,520 1172,480 1184,445 1195,432 1210,425 1222,440 1232,420 1244,395 1255,380 1260,455 1266,390 1275,362 1285,380 1295,375 1302,415 1314,352 1322,420 1332,440 1345,480 1358,520 1368,550 1380,630 1384,645 1392,625 1406,582 1414,628 1424,625 1432,652 1438,570 1448,525 1454,560 1461,595 1470,545 1490,520 1502,480 1512,515 1522,470 1527,440 1534,500 1545,550 1554,480 1568,485',
    '5,445 12,485 20,488 28,460 36,520 46,598 52,565 60,560 66,598 75,512 82,540 90,568 100,535 108,495 120,465 128,450 134,550 145,545 157,530 164,548 174,530 185,555 192,550 202,595 210,555 218,545 224,470 236,480 246,455 256,475 264,490 272,460 282,490 292,455 300,420 308,455 320,470 330,440 342,400 352,345 366,312 374,340 382,305 394,300 398,200 408,155 418,160 430,148 440,185 448,175 454,180 460,90 466,155 472,130 480,138 488,190 494,270 504,290 511,310 520,285 535,290 548,295 558,355 566,325 574,292 580,340 590,360 600,410 612,425 626,420 636,450 648,465 660,470 670,475 686,440 694,460 712,450 718,500 724,545 732,565 742,575 752,610 764,590 776,530 780,570 790,520 806,480 814,545 824,495 832,475 838,545 844,605 852,595 860,605 872,560 888,488 896,530 908,555 922,475 930,595 938,530 948,460 960,485 968,480 976,520 986,540 996,515 1010,490 1024,490 1036,425 1048,455 1058,400 1064,375 1069,500 1074,560 1082,480 1092,410 1098,320 1104,305 1114,305 1124,328 1134,295 1148,290 1154,250 1162,210 1168,270 1173,335 1180,320 1187,360'
];

const cci = [
    '198,1198 235,1200 250,1145 270,1060 290,990 310,935 330,912 345,902 360,910 375,892 390,887 400,895 430,897 450,912 480,915 500,928 535,955 565,950 590,985 608,1035 620,1095 640,1162 665,1172 685,1155 700,1120 714,1095 725,1115 740,1160 770,1210 790,1255 815,1287 840,1291 875,1288 890,1255 910,1208 940,1155 975,1112 1000,1108 1040,1088 1060,1060 1085,1002 1100,993 1115,967 1130,963 1170,962 1190,990 1213,1060 1235,1190 1262,1310 1290,1342 1305,1310 1330,1220 1360,1140 1390,1080 1400,1073 1425,1090 1450,1130 1475,1157 1500,1162 1520,1190 1540,1212 1568,1223',
    '0,1223 15,1222 45,1165 80,1137 100,1080 113,1055 130,1073 155,1073 188,1115 205,1085 225,1080 240,1060 265,1055 290,1070 320,1082 362,1115 380,1085 400,1092 425,1088 434,1073 444,1122 455,1085 475,960 490,870 505,835 515,785 524,757 540,780 555,825 570,852 600,870 630,873 650,890 670,905 697,912 715,935 740,975 790,1045 810,1058 870,1055 900,1085 915,1140 940,1195 980,1216 997,1192 1015,1205 1040,1228 1065,1225 1095,1135 1110,1115 1133,1105 1150,1120 1175,1175 1190,1172 1235,1132 1260,1087 1265,1102 1290,1050 1322,1012 1345,1035 1370,1140 1390,1250 1410,1305 1430,1326 1445,1305 1465,1260 1500,1195 1530,1158 1568,1137',
    '0,1132 40,1130 60,1170 90,1225 115,1238 130,1210 155,1205 180,1192 200,1200 212,1220 235,1190 280,1145 307,1117 330,1125 345,1113 370,1040 395,955 410,870 425,815 440,802 470,803 490,850 520,915 565,988 590,995 640,1040 675,1095 715,1120 740,1165 770,1215 797,1242 820,1220 838,1192 880,1220 913,1226 930,1200 960,1175 1030,1170 1055,1160 1070,1122 1083,1152 1100,1120 1115,1050 1140,960 1160,880 1172,850 1187,868'
];

// Histogram fill and the clips that recolour the CCI line past 120 / -120
const defs = add(plot, 'defs', {});
const stripes = add(defs, 'pattern', { id: 'stripes', width: 2, height: 8, patternUnits: 'userSpaceOnUse' });
add(stripes, 'rect', { width: 1, height: 8, fill: '#444' });
add(add(defs, 'clipPath', { id: 'over' }), 'rect', { x: LEFT, y: 774, width: WIDTH, height: 70 });
add(add(defs, 'clipPath', { id: 'under' }), 'rect', { x: LEFT, y: 942, width: WIDTH, height: 50 });

for (let x = 110.5; x < 1735; x += 36) {
    add(plot, 'path', { class: 'line grid', d: `M${x} 109V550M${x} 570V771M${x} 793V988` });
}

// Price pane
hline(389.5, '#808000', 1837, { 'stroke-dasharray': '4 4' });
const priceBars = bars(join(PRICE, price), 2);
add(plot, 'path', { class: 'line', stroke: '#6666ff', d: poly(priceBars) });

curve(PRICE, ['198,305 265,290 300,272 350,240 400,203 440,196 560,197 590,203 612,217 632,230 680,285 725,340 790,380 870,440 940,465 970,462 1020,440 1060,435 1090,452 1110,480 1160,517 1220,538 1260,570 1320,625 1390,702 1430,716 1510,748 1540,775 1568,795',
    '0,797 40,815 90,820 210,812 250,820 270,830 295,830 340,800 400,748 450,680 500,590 560,500 620,430 700,387 725,384 770,393 820,435 870,483 910,503 950,510 1000,550 1060,588 1120,598 1200,598 1240,645 1290,700 1360,755 1420,820 1450,860 1500,935 1540,980 1568,998',
    '0,1000 30,1020 80,1080 150,1145 185,1173 215,1173 245,1160 280,1115 370,1003 440,930 500,883 550,865 575,875 620,920 670,958 760,1030 820,1075 870,1125 920,1145 980,1143 1030,1115'], '#ffff00');

[
    [0, '198,342 230,350 270,342 290,328 360,280 400,246 450,212 500,182 540,172 580,168 600,176 630,205 650,216 680,218 700,208 730,228 770,265 800,300 840,375 880,445 900,462 930,473 970,466 1040,468 1075,442 1120,422 1160,420 1200,414'],
    [0, '1232,455 1260,520 1290,590 1310,630 1325,636 1350,625 1390,597 1410,602 1440,640 1470,665 1490,672 1520,712 1568,792'],
    [1, '0,790 20,820 80,822 110,790 150,795 190,803 250,803 300,822 350,830 420,832 450,834 475,805 510,725 535,665 560,625 590,560 630,460 660,410 693,363 717,357 740,366 790,400'],
    [1, '825,400 880,402 905,415 940,455 990,500 1010,510 1055,572 1080,575 1115,560 1140,568 1190,612 1230,612 1320,593 1348,597 1365,618 1385,660 1410,730 1440,800 1480,850 1520,882 1568,898'],
    [2, '0,898 30,910 60,945 110,1050 140,1065 180,1105 215,1170 240,1185 270,1190 300,1185 335,1200 360,1190 395,1150 420,1060 470,920 500,880 540,850 600,846 640,875'],
    [2, '670,905 715,918 750,945 790,1000 840,1028 900,1098 950,1125 1000,1155 1040,1172 1092,1180 1110,1162 1145,1125 1160,1085 1175,1055 1187,1048']
].forEach(s => segment(s[0], PRICE, s[1], '#0000ff', 'medium'));

[
    [0, '198,311 234,311'],
    [0, '575,185 590,177 610,171 640,170 680,173 710,180 750,197 800,217 830,235 860,260 900,318 940,370 970,415 1008,450'],
    [0, '1170,425 1200,414 1240,412 1270,422 1300,442 1330,478 1350,508'],
    [0, '1392,563 1415,588 1440,604 1470,613 1510,618 1540,635 1570,657'],
    [1, '0,655 30,690 75,748'],
    [1, '110,788 150,800 190,805'],
    [1, '195,801 220,793 260,789 310,792 365,803'],
    [1, '386,810 445,813'],
    [1, '728,435 742,418'],
    [1, '770,385 790,370'],
    [1, '790,362 820,356 828,351 850,355 880,367 910,380 950,402 1000,425 1040,450 1080,490'],
    [1, '1088,498 1130,528 1175,555 1215,568 1265,577'],
    [1, '1322,590 1370,592 1405,600 1440,625 1475,660 1520,740 1568,822'],
    [2, '0,822 45,865 90,895 150,935 200,1010 260,1090 310,1140 342,1162'],
    [2, '597,865 615,842 640,829 665,829 700,842 740,865 790,905 850,950 920,1020 980,1070 1030,1105 1090,1138']
].forEach(s => segment(s[0], PRICE, s[1], '#ff0000', 'thick'));

[
    [0, '234,337 270,346 310,351 350,350 380,340 420,312 470,268 520,232 570,208'],
    [0, '704,200 712,205'],
    [0, '1012,487 1030,495 1060,497 1090,490 1130,474 1170,458'],
    [0, '1352,545 1390,598'],
    [1, '76,787 110,820'],
    [1, '200,830 210,836'],
    [1, '366,838 388,846'],
    [1, '444,852 480,853 510,845 550,815 580,772 620,690 670,580 725,480'],
    [1, '743,448 768,422'],
    [1, '1084,530 1092,536'],
    [1, '1250,610 1278,622'],
    [1, '1302,627 1325,627'],
    [2, '342,1214 380,1219 410,1213 440,1190 490,1115 530,1030 560,965 595,903'],
    [2, '1055,1165 1064,1170'],
    [2, '1090,1184 1115,1192 1145,1194 1170,1186 1190,1174']
].forEach(s => segment(s[0], PRICE, s[1], '#00ff00', 'thick'));

add(plot, 'path', {
    fill: '#00ffff',
    d: priceBars.map(p => `M${Math.round(p[0]) - 2} ${Math.round(p[1]) - 2}h4v4h-4z`).join('')
});

// Entry and exit arrows
function arrow(tile, x, top, bottom, up) {
    const a = pos(tile, PRICE, x, top), b = pos(tile, PRICE, x, bottom);
    const tip = up ? a : b, end = up ? b : a, k = up ? 1 : -1;
    add(plot, 'path', {
        fill: up ? '#00ff00' : '#ff0000',
        d: `M${tip[0]} ${tip[1]}l5 ${7 * k}h-3V${end[1]}h-4V${tip[1] + 7 * k}h-3z`
    });
}
[[0, 276, 297, 343], [0, 1065, 396, 436], [1, 461, 770, 808], [1, 1290, 598, 636], [2, 369, 1083, 1121], [2, 1118, 1038, 1076]].forEach(a => arrow(...a, true));
[[0, 614, 218, 265], [0, 1217, 415, 460], [1, 806, 360, 408], [1, 1354, 655, 700], [2, 654, 870, 917]].forEach(a => arrow(...a, false));

function flag(tile, x, y, color) {
    const p = pos(tile, PRICE, x, y);
    add(plot, 'path', { fill: color, d: `M${p[0] - 2} ${p[1] - 4}l5 4-5 4z` });
}
[[0, 266, 265], [0, 1056, 355], [1, 455, 745], [1, 1280, 565], [1, 1090, 530], [2, 360, 1055], [2, 1110, 1018]].forEach(f => flag(...f, '#00ff00'));
[[0, 604, 287], [0, 1209, 517], [1, 798, 427], [1, 1345, 720], [2, 646, 925]].forEach(f => flag(...f, '#ff0000'));

// MACD pane
hline(597.5, '#ff0000', 1764);
hline(637.5, '#6b6b00', 1764);
hline(672.5, '#800080', 1764);
hline(676.5, '#0000ff', 1764, { 'stroke-dasharray': '4 4' });
hline(716.5, '#6b6b00', 1764);
hline(756.5, '#ff0000', 1764);

curve(LOWER, ['198,410 240,365 280,315 310,293 335,293 365,315 400,352 460,410 540,480 620,502 680,532 720,540 760,530 800,500 840,445 880,365 930,285 970,235 1000,228 1030,245 1070,305 1120,400 1160,480 1190,520 1215,535 1250,510 1300,465 1350,410 1390,382 1420,383 1460,420 1495,437 1530,405 1568,340',
    '0,340 30,300 60,294 110,305 160,345 230,372 290,365 325,373 360,350 410,285 450,220 490,180 520,171 550,185 580,235 620,370 660,490 700,565 760,612 805,629 850,600 900,550 960,480 1040,395 1100,340 1150,320 1180,322 1210,345 1260,415 1310,485 1350,525 1385,533 1420,515 1480,430 1520,382 1568,368',
    '0,370 50,402 90,424 130,400 170,345 210,295 240,278 270,245 300,190 325,120 350,92 370,87 395,105 430,175 480,320 520,480 550,570 590,628 620,642 650,625 700,580 760,530 810,480 870,395 910,342 960,332 990,305 1028,257'], '#008080');
curve(LOWER, ['210,430 250,390 300,330 340,302 390,298 430,313 460,345 510,440 585,490 640,525 700,547 750,547 800,530 850,480 900,390 950,290 1000,227 1040,215 1080,240 1120,310 1160,400 1200,490 1240,525 1280,542 1310,535 1340,505 1390,430 1430,397 1500,397 1568,365',
    '0,360 60,325 110,300 150,297 190,312 250,355 320,380 370,365 430,290 490,215 540,175 570,172 600,210 640,320 690,450 730,560 780,650 825,686 860,665 920,580 980,500 1050,395 1120,320 1180,294 1220,305 1270,370 1320,440 1380,515 1430,540 1470,520 1530,430 1568,405',
    '5,398 40,378 130,380 200,345 250,300 300,205 340,120 380,98 420,100 460,155 500,280 550,440 600,590 640,670 670,695 710,680 770,600 830,490 870,415 940,335 1024,252'], '#ffff00', 'dashed');
curve(LOWER, ['198,430 240,434 290,415 350,365 410,322 450,312 490,322 540,362 600,435 660,490 720,528 800,542 860,530 900,500 950,430 1000,340 1050,275 1090,245 1130,242 1170,270 1220,350 1270,440 1310,500 1355,520 1400,503 1450,460 1510,412 1568,390',
    '0,390 60,368 140,325 200,311 250,312 300,335 350,360 410,364 450,345 510,285 570,228 610,205 650,212 690,265 740,380 800,530 850,615 890,652 930,653 970,620 1030,540 1090,450 1150,365 1200,322 1250,313 1300,322 1350,370 1410,460 1460,505 1510,517 1568,485',
    '0,485 60,430 120,385 210,368 280,330 330,275 400,180 450,130 480,125 520,150 570,265 620,410 680,570 730,650 765,667 800,652 850,590 910,480 970,395 1028,328'], '#ffff00');
add(plot, 'path', { class: 'line', stroke: '#00ffff', d: poly(bars(join(LOWER, leo), 2)) });
add(plot, 'path', { class: 'line', stroke: '#ff00ff', d: poly(points(2, LOWER, '846,610 1366,492')) });

// CCI pane
const cciPath = poly(join(LOWER, cci));
add(plot, 'path', { fill: 'url(#stripes)', d: cciPath + 'V892H81Z' });
hline(844.5, '#a0a0a0', 1764);
hline(883.5, '#800080', 1764);
hline(941.5, '#a0a0a0', 1764);
curve(LOWER, ['198,1339 240,1342 270,1310 310,1200 340,1050 360,910 372,780 385,757 475,757 500,790 535,890 560,970 580,1030 600,1130 620,1270 635,1342 900,1342 940,1325 965,1260 985,1140 1010,1030 1030,880 1045,770 1060,757 1130,757 1180,775 1220,885 1240,980 1262,1100 1285,1250 1300,1342 1345,1342 1375,1260 1400,1195 1440,1160 1475,1150 1480,1100 1505,1015 1568,980',
    '0,1010 10,1080 30,1240 50,1325 70,1340 90,1250 100,1100 115,920 130,790 145,757 250,757 280,800 330,900 360,955 380,945 415,957 434,920 445,1010 460,1035 470,900 480,820 495,757 700,757 725,820 750,960 780,1140 800,1290 815,1342 985,1342 1020,1322 1040,1342 1070,1340 1095,1280 1130,1265 1165,1190 1190,1030 1205,850 1220,780 1260,757 1330,757 1350,850 1380,1080 1395,1240 1415,1342 1520,1342 1555,1310 1568,1290',
    '5,1290 20,1240 40,1150 80,1110 110,1000 135,918 160,950 180,1060 200,1200 225,1305 240,1280 260,1170 290,1000 310,830 330,757 510,757 540,790 580,830 610,910 635,1010 655,1180 670,1300 690,1342 790,1340 820,1317 850,1330 880,1342 910,1325 955,1325 1000,1220 1015,1050 1030,850 1040,757 1065,757 1090,835 1110,757 1187,757'], '#c86400', 'dashed');
curve(LOWER, ['198,1060 230,980 270,920 305,920 330,950 360,1025 400,1070 440,1085 480,1065 520,1073 590,1105 620,1090 650,1030 685,1000 715,1010 745,1090 775,1155 800,1168 825,1135 850,1060 880,920 905,845 930,823 955,840 985,930 1020,1020 1060,1058 1115,1063 1160,1105 1200,1210 1225,1232 1250,1200 1280,1070 1310,880 1335,775 1350,760 1375,800 1410,1000 1445,1210 1468,1250 1490,1235 1530,1130 1568,960',
    '3,935 20,850 45,802 65,820 90,890 120,1010 150,1125 178,1150 205,1100 250,1030 310,1000 385,1022 410,990 440,900 470,850 505,840 530,900 570,1030 620,1110 680,1210 725,1242 750,1220 775,1110 810,990 845,955 870,965 900,1040 930,1110 960,1118 990,1080 1040,950 1075,916 1105,945 1150,1060 1175,1070 1210,1010 1255,972 1290,1000 1320,1120 1350,1240 1380,1277 1400,1230 1430,1080 1460,900 1485,810 1505,788 1530,830 1568,1000',
    '3,1010 30,1140 60,1208 90,1170 120,1050 160,950 225,924 270,932 310,962 340,920 375,830 400,810 425,840 450,980 480,1180 510,1310 540,1342 570,1290 610,1120 640,1000 680,958 710,985 750,1045 785,1067 830,1030 880,1018 930,985 970,995 1025,1000 1060,960 1085,905 1107,882'], '#ff0000', 'dashed');
curve(LOWER, ['198,1082 215,1075 240,1040 270,985 300,940 325,924 350,935 380,985 420,1050 450,1073 480,1079 540,1072 580,1085 620,1099 660,1075 690,1035 715,1015 740,1018 765,1050 795,1115 820,1145 840,1150 865,1120 890,1020 915,930 940,870 965,845 990,860 1020,920 1045,990 1080,1040 1110,1060 1155,1072 1190,1105 1230,1175 1260,1207 1280,1190 1310,1080 1340,930 1365,830 1385,800 1405,825 1430,920 1455,1070 1480,1180 1510,1220 1535,1205 1568,1083',
    '3,1075 20,1000 45,910 70,845 88,832 110,855 140,945 170,1050 200,1115 220,1123 245,1105 290,1035 330,1008 400,1015 440,990 480,900 510,862 535,856 560,880 600,980 650,1085 700,1175 740,1222 765,1225 790,1180 830,1050 860,985 883,972 910,990 960,1085 990,1102 1020,1090 1060,1000 1090,945 1115,937 1140,955 1180,1030 1210,1053 1240,1030 1290,988 1310,995 1340,1060 1380,1190 1415,1247 1440,1200 1470,1060 1500,920 1525,840 1545,820 1568,855',
    '3,860 20,920 45,1040 70,1145 100,1184 130,1145 165,1040 200,965 235,933 270,929 330,947 375,910 405,860 435,838 460,860 485,960 520,1150 550,1280 575,1313 600,1280 640,1120 670,1040 700,985 725,978 760,1005 820,1058 860,1048 920,1010 970,992 1050,995 1075,980 1105,937'], '#0000ff');
add(plot, 'path', { class: 'line', stroke: '#c0c0c0', d: cciPath });
add(plot, 'path', { class: 'line', stroke: '#ff0000', d: cciPath, 'clip-path': 'url(#over)' });
add(plot, 'path', { class: 'line', stroke: '#00ffff', d: cciPath, 'clip-path': 'url(#under)' });

function dot(tile, x, y, color) {
    const p = pos(tile, LOWER, x, y);
    add(plot, 'circle', { cx: p[0], cy: p[1], r: 4, fill: color });
}
[[0, 490, 780], [0, 1142, 774], [0, 1167, 774], [1, 265, 780], [1, 706, 780], [1, 1231, 777], [1, 1334, 780], [2, 525, 777], [2, 1074, 780]].forEach(d => dot(...d, '#00ffff'));
[[0, 246, 1326], [0, 942, 1326], [0, 1354, 1323], [1, 79, 1317], [1, 996, 1329], [1, 1074, 1326], [1, 1529, 1323], [2, 805, 1326], [2, 902, 1329], [2, 908, 1329], [2, 951, 1329]].forEach(d => dot(...d, '#ff0000'));

// Freehand notes
[
    [1, PRICE, '1422,955 1424,921 1487,921 1515,932 1526,950 1530,975 1524,1005 1505,1023 1482,1035 1440,1062 1405,1060 1375,1045 1348,1010 1338,985 1320,957 1318,930 1338,904 1445,903 1447,918'],
    [1, PRICE, '1390,1142 1372,1190 1355,1250 1348,1322 1357,1312 1360,1250 1372,1145 1385,1110 1405,1087 1418,1085 1430,1130 1450,1190 1467,1265 1453,1266'],
    [1, PRICE, '1363,1220 1392,1230 1518,1233'],
    [2, PRICE, '722,1083 745,1060 770,1045 800,1043 770,1036 735,1050 708,1055 690,1073 672,1095 670,1130 690,1165 730,1195 775,1215 820,1216 860,1203 882,1175 888,1140 875,1100 850,1065 800,1050 755,1036'],
    [2, PRICE, '700,1234 708,1223 760,1230 792,1247 790,1270 778,1285 762,1290 780,1310 797,1340 797,1383 760,1382 740,1375 687,1374'],
    [2, PRICE, '710,1225 716,1300 728,1350 744,1400 736,1393'],
    [1, LOWER, '1348,410 1378,413 1425,413 1462,416 1474,430'],
    [1, LOWER, '1418,415 1375,450 1328,485 1310,530 1306,590 1330,660 1350,705 1380,740 1430,747 1465,745 1480,730 1498,660 1507,600 1515,560 1505,500 1488,465 1470,432 1440,420 1418,415'],
    [2, LOWER, '795,474 760,474 730,487 697,525 688,560 685,620 705,665 730,710 760,745 790,765 825,770 845,755 855,725 855,600 835,550 820,523 772,523']
].forEach(n => add(plot, 'path', { class: 'pen', d: poly(points(...n)) }));

// Text over the plot, placed by percentage so it is never stretched
function pct(v, start, size) {
    return ((v - start) / size * 100).toFixed(3) + '%';
}
function label(x, y, text, cls, anchor) {
    add(labels, 'text', { x: pct(x, LEFT, WIDTH), y: pct(y, TOP, HEIGHT), class: cls, 'text-anchor': anchor }, text);
}
[[0, 276, 386, '1'], [0, 612, 187, '-1'], [0, 1214, 383, '-1'], [0, 1066, 485, '1'], [1, 803, 331, '-1'], [1, 461, 858, '1'], [1, 1290, 685, '1'], [1, 1352, 622, '-1'], [2, 652, 838, '-1'], [2, 370, 1172, '1'], [2, 1118, 1126, '1']].forEach(([tile, x, y, text]) => {
    const p = pos(tile, PRICE, x, y);
    label(p[0], p[1], text, 'mark', 'middle');
});
label(1838, 385, '21145.000', 'last-high', 'end');

// Price axes
const left = document.getElementById('axis-left');
const right = document.getElementById('axis-right');
const scale = [[128.5, '23000'], [199.5, '22500'], [269.5, '22000'], [339.5, '21500'], [409.5, '21000'], [479.5, '20500'], [577.5, '10.00'], [617.5, '6.00'], [656.5, '2.00'], [696.5, '-2.00'], [736.5, '-6.00']];

function tick(axis, y, text) {
    const isLeft = axis === left, py = pct(y, TOP, HEIGHT);
    add(axis, 'line', { x1: isLeft ? 71 : 0, x2: isLeft ? 79 : 6, y1: py, y2: py, stroke: '#fff' });
    if (text) add(axis, 'text', { x: isLeft ? 69 : 7, y: py, dy: 7, 'text-anchor': isLeft ? 'end' : 'start' }, text);
}
function box(axis, y, text, color, height) {
    add(axis, 'rect', { x: 0, width: '100%', y: pct(y, TOP, HEIGHT), height: height || 23, fill: color });
    add(axis, 'text', { x: axis === left ? 70 : 8, y: pct(y, TOP, HEIGHT), dy: 19, 'text-anchor': axis === left ? 'end' : 'start', style: 'fill:#000' }, text);
}

[left, right].forEach(axis => {
    [550.5, 773.5].forEach(y => add(axis, 'line', { x1: 0, x2: '100%', y1: pct(y, TOP, HEIGHT), y2: pct(y, TOP, HEIGHT), stroke: '#fff' }));
});
scale.forEach(s => tick(left, ...s));
[597.5, 637.5, 676.5, 716.5, 756.5].forEach(y => tick(left, y));
[[810.5, '400.00'], [920.5, '-200....'], [957.5, '-400....']].forEach(s => tick(left, ...s));
box(left, 842, '174.75', '#0000ff');
box(left, 826, '265.35', '#ff0000');
box(left, 874, '0.00', '#800080');

scale.filter(s => s[1] !== '20500' && s[1] !== '2.00').forEach(s => tick(right, ...s));
[[791.5, '250.00'], [811.5], [872.5, '50.00'], [892.5], [913.5, '-50.00'], [953.5, '-150.00'], [974.5]].forEach(s => tick(right, ...s));
box(right, 453, '20625', '#ffff00');
box(right, 429, '20795', '#6666ff');
box(right, 472, '20488', '#00ff00');
box(right, 588, '8.00', '#ff0000');
box(right, 628, '4.00', '#6b6b00');
box(right, 667, '0.00', '#0000ff');
box(right, 651, '1.66', '#00ffff');
box(right, 707, '-4.00', '#6b6b00');
box(right, 747, '-8.00', '#ff0000');
box(right, 835, '120.00', '#808080');
box(right, 820, '155.71', '#ff0000');
box(right, 932, '-120.00', '#808080');

// Time axis
const time = document.getElementById('axis-time');
function timeTick(x, height, text) {
    add(time, 'line', { x1: pct(x, 2, 1916), x2: pct(x, 2, 1916), y1: 0, y2: height, stroke: '#fff' });
    if (text) add(time, 'text', { x: pct(x + 26, 2, 1916), y: 23, 'text-anchor': 'middle' }, text);
}
timeTick(122.5, 4);
timeTick(146.5, 10, '8/12');
['8/18', '8/22', '8/23', '8/25', '8/29', '8/31', '9/02', '9/06', '9/08', '9/12', '9/14', '9/15', '9/19', '9/21', '9/23', '9/27', '9/29', '10/03', '10/05', '10/07', '10/10', '10/12', '10/14', ''].forEach((text, i) => timeTick(258.5 + i * 68, 4, text));
```
